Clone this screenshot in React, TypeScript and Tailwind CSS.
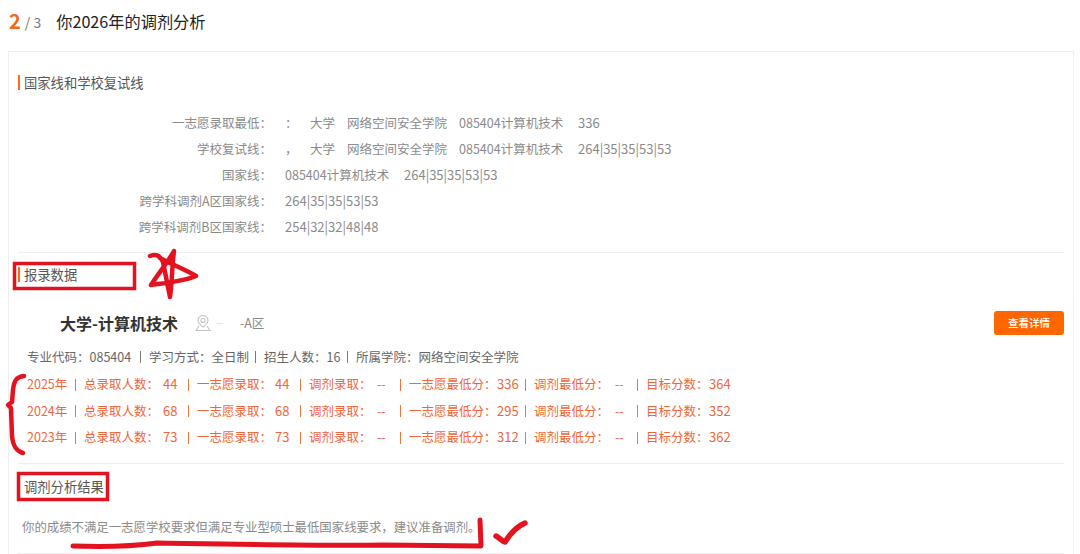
const font = "font-['Noto_Sans_CJK_SC','Liberation_Sans',sans-serif]";

const school = ["大学", "网络空间安全学院", "085404计算机技术"];

const scoreLines = [
  { label: "一志愿录取最低：", cells: ["：", ...school, "336"], offset: true },
  { label: "学校复试线：", cells: ["，", ...school, "264|35|35|53|53"], offset: true },
  { label: "国家线：", cells: ["085404计算机技术", "264|35|35|53|53"], offset: false },
  { label: "跨学科调剂A区国家线：", cells: ["264|35|35|53|53"], offset: false },
  { label: "跨学科调剂B区国家线：", cells: ["254|32|32|48|48"], offset: false },
];

const years = [
  { year: "2025年", total: "44", first: "44", low: "336", target: "364", rowClass: "h-[27px]" },
  { year: "2024年", total: "68", first: "68", low: "295", target: "352", rowClass: "h-[26px]" },
  { year: "2023年", total: "73", first: "73", low: "312", target: "362", rowClass: "h-[27px]" },
];

function SectionHead({ title, bar = true }: { title: string; bar?: boolean }) {
  return (
    <div className="flex h-[15px] items-center">
      <span className={bar ? "h-[15px] w-[2px] bg-[#ff6a13]" : "h-[15px] w-[2px]"} />
      <span className="ml-[4px] text-[13.3px] leading-[15px] text-[#555555]">{title}</span>
    </div>
  );
}

function Sep() {
  return <span className="h-[12px] w-px shrink-0 self-center bg-[#f0743c]" />;
}

function InfoSep() {
  return <span className="mr-[8px] h-[12px] w-px shrink-0 bg-[#777777]" />;
}

// Value cells of a score line sit on fixed columns, blanked-out names leave the gaps
function ScoreCells({ cells, offset }: { cells: string[]; offset: boolean }) {
  const widths = offset
    ? ["w-[25px]", "w-[37px]", "w-[112px]", "w-[119px]", "text-[13px]"]
    : ["w-[119px]", "text-[13px]"];
  return (
    <dd className="ml-[13px] flex items-baseline whitespace-nowrap text-[#8a8a8a]">
      {cells.map((cell, idx) => (
        <span key={idx} className={cells.length > 1 ? widths[idx] : "text-[13px]"}>
          {cell}
        </span>
      ))}
    </dd>
  );
}

// Red marker scribbles drawn on top of the screenshot
function Scribbles() {
  return (
    <svg
      className="pointer-events-none absolute left-0 top-0"
      width="1080"
      height="554"
      viewBox="0 0 1080 554"
      fill="none"
      stroke="#e3121f"
      strokeLinecap="round"
      strokeLinejoin="round"
    >
      <rect x="14.5" y="263.5" width="120" height="25" strokeWidth="3.5" strokeLinejoin="miter" />
      <rect x="18.5" y="473.5" width="89" height="26" strokeWidth="3.5" strokeLinejoin="miter" />
      <path
        d="M150 256 C155 254 160 255 163 262 L170 297 C172 285 172 265 174 251 C168 262 158 274 151 285 C165 283 185 281 196 276 C186 270 173 265 160 258"
        strokeWidth="4.5"
      />
      <path d="M24 376 C16 377 14 381 13 390 L12 402 L8 405 L11 408 L12 436 C13 446 16 451 23 453" strokeWidth="4.5" />
      <path d="M73 546 C100 547 135 546 157 543 C220 544 320 546 383 545 L481 546 L480 520" strokeWidth="5" />
      <path d="M496 536 C500 538 502 541 505 542 C510 534 516 527 525 523" strokeWidth="5.5" />
    </svg>
  );
}

export default function App() {
  return (
    <div className={`relative h-[554px] w-[1080px] overflow-hidden bg-white ${font}`}>
      <header className="flex h-[51px] items-start pl-[9px] pt-[9px]">
        <span className="text-[20px] font-bold leading-[24px] text-[#f26a1b]">2</span>
        <span className="ml-[4px] mt-[3px] text-[14px] leading-[20px] text-[#777777]">/ 3</span>
        <span className="ml-[15px] mt-[1px] text-[16.2px] leading-[22px] text-[#222222]">你2026年的调剂分析</span>
      </header>

      <main className="ml-[8px] h-[503px] w-[1066px] border-x border-t border-[#eeeeee] px-[9px]">
        <section className="h-[201px] border-b border-[#eeeeee] pt-[23px]">
          <SectionHead title="国家线和学校复试线" />
          <dl className="mt-[20px] flex flex-col">
            {scoreLines.map((line) => (
              <div key={line.label} className="flex h-[26px] items-baseline text-[12.5px] leading-[26px]">
                <dt className="w-[254px] whitespace-nowrap text-right text-[#8a8a8a]">{line.label}</dt>
                <ScoreCells cells={line.cells} offset={line.offset} />
              </div>
            ))}
          </dl>
        </section>

        <section className="h-[211px] border-b border-[#eeeeee] pt-[14px]">
          <SectionHead title="报录数据" />
          <div className="mt-[29px] flex h-[24px] items-center">
            <h2 className="ml-[42px] text-[16px] font-bold leading-[24px] text-[#333333]">大学-计算机技术</h2>
            <svg className="ml-[17px]" width="16" height="17" viewBox="0 0 16 17" fill="none" stroke="#c4c4c4" strokeWidth="1.1">
              <path d="M8 12 C4.5 9.5 3 7.6 3 5.5 A5 5 0 0 1 13 5.5 C13 7.6 11.5 9.5 8 12 Z" />
              <circle cx="8" cy="5.5" r="2" />
              <path d="M4 11 L1 15.5 H15 L12 11" />
            </svg>
            <span className="ml-[5px] h-px w-[7px] bg-[#e6e6e6]" />
            <span className="ml-[17px] text-[12.5px] text-[#888888]">-A区</span>
            <button
              type="button"
              className="ml-auto h-[24px] w-[70px] rounded-[3px] bg-[#ff6600] text-[10.5px] font-medium text-white"
            >
              查看详情
            </button>
          </div>

          <p className="mt-[12px] flex h-[20px] items-center whitespace-nowrap pl-[9px] text-[12.5px] text-[#666666]">
            <span className="w-[113px]">专业代码：085404</span>
            <InfoSep />
            <span className="w-[106px]">学习方式：全日制</span>
            <InfoSep />
            <span className="w-[83px]">招生人数：16</span>
            <InfoSep />
            <span>所属学院：网络空间安全学院</span>
          </p>

          <div className="mt-[4px] flex flex-col pl-[9px] text-[12.5px] leading-[26px] text-[#f0663a]">
            {years.map((row) => (
              <div key={row.year} className={`flex items-baseline whitespace-nowrap ${row.rowClass}`}>
                <span className="w-[48px]">{row.year}</span>
                <Sep />
                <span className="ml-[8px] w-[79px]">总录取人数：</span>
                <span className="w-[25px] text-[13px]">{row.total}</span>
                <Sep />
                <span className="ml-[8px] w-[78px]">一志愿录取：</span>
                <span className="w-[25px] text-[13px]">{row.first}</span>
                <Sep />
                <span className="ml-[8px] w-[68px]">调剂录取：</span>
                <span className="w-[23px]">--</span>
                <Sep />
                <span className="ml-[8px] w-[88px]">一志愿最低分：</span>
                <span className="w-[28px] text-[13px]">{row.low}</span>
                <Sep />
                <span className="ml-[8px] w-[81px]">调剂最低分：</span>
                <span className="w-[22px]">--</span>
                <Sep />
                <span className="ml-[8px] w-[63px]">目标分数：</span>
                <span className="text-[13px]">{row.target}</span>
              </div>
            ))}
          </div>
        </section>

        <section className="h-[90px] border-b border-[#eeeeee] pt-[15px]">
          <SectionHead title="调剂分析结果" bar={false} />
          <p className="mt-[23px] whitespace-nowrap pl-[4px] text-[12.4px] leading-[20px] text-[#8a8a8a]">
            你的成绩不满足一志愿学校要求但满足专业型硕士最低国家线要求，建议准备调剂。
          </p>
        </section>
      </main>

      <Scribbles />
    </div>
  );
}
